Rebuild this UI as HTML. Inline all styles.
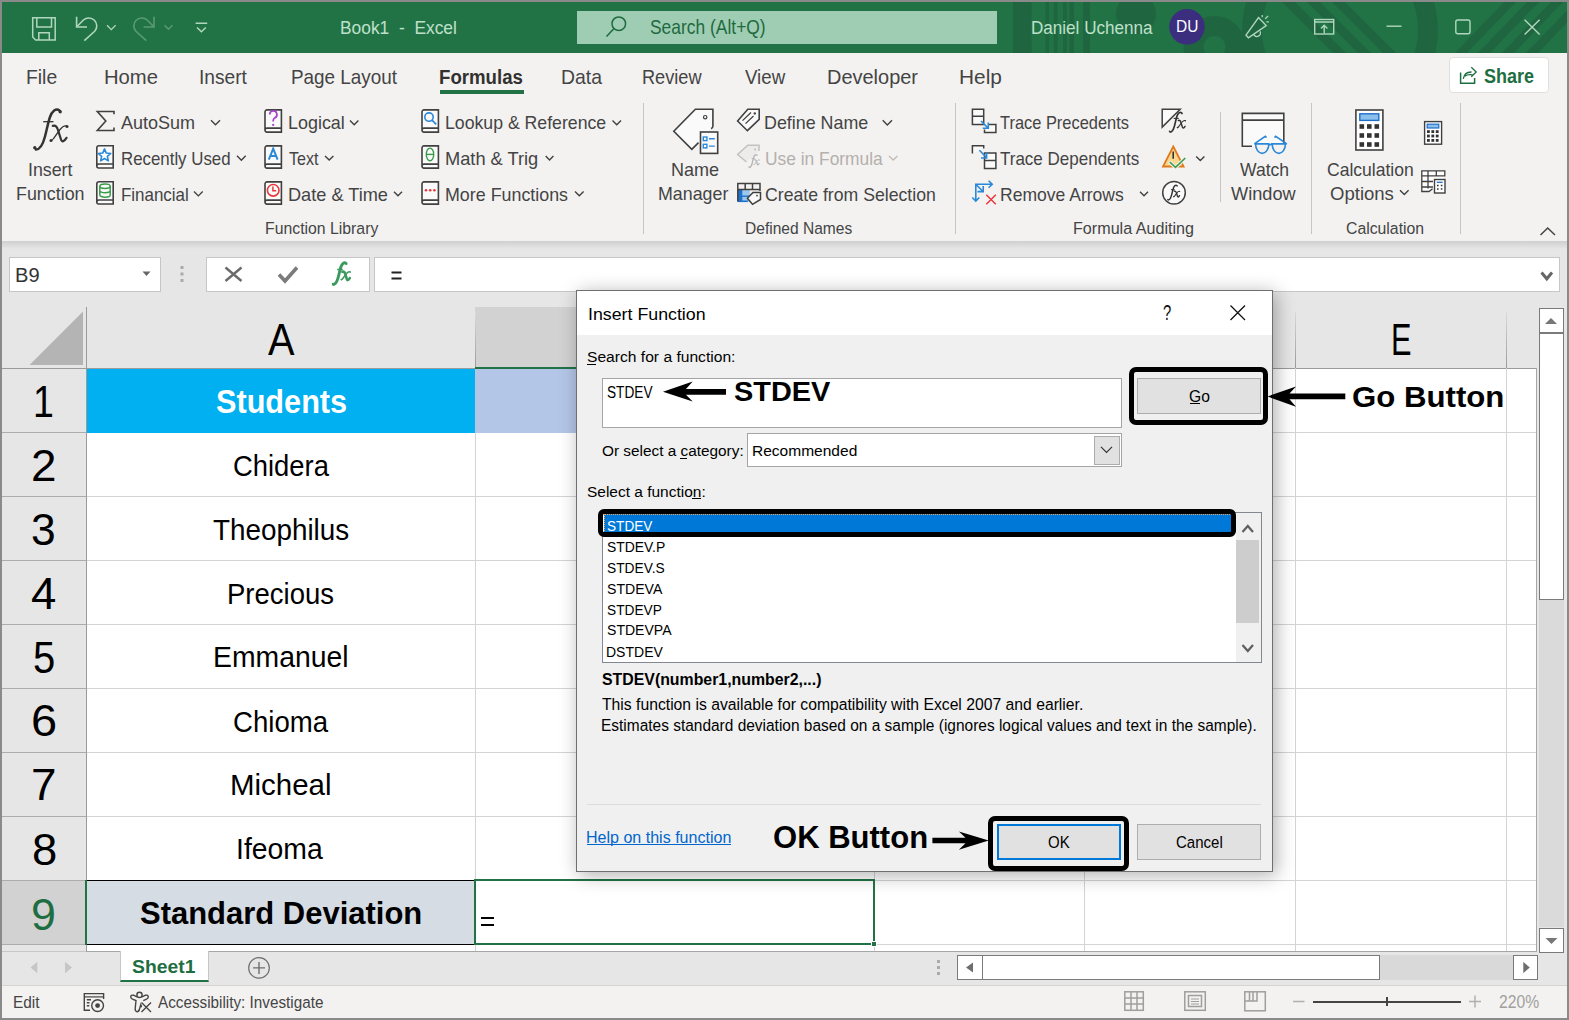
<!DOCTYPE html>
<html><head><meta charset="utf-8">
<style>
html,body{margin:0;padding:0}
body{width:1569px;height:1020px;position:relative;overflow:hidden;background:#8a8a8a;font-family:"Liberation Sans",sans-serif}
.a{position:absolute;box-sizing:border-box}
.t{position:absolute;white-space:pre;transform-origin:0 0;font-family:"Liberation Sans",sans-serif}
svg{position:absolute;overflow:visible}
</style></head><body>
<!-- title bar -->
<div class="a" style="left:2px;top:2px;width:1565px;height:51px;background:#217346;overflow:hidden">
<svg style="left:0;top:0" width="1565" height="51" viewBox="2 2 1565 51">
<g fill="#1f6640" opacity="1">
<rect x="1013" y="0" width="18.6" height="60"/>
<rect x="1045.5" y="0" width="3.5" height="60"/>
<rect x="1053.8" y="0" width="3.7" height="60"/>
<rect x="1063" y="0" width="3.7" height="60"/>
<rect x="1069.5" y="0" width="4.5" height="60"/>
<path d="M1083 0 H1090 V60 H1083 Z"/>
<circle cx="1136" cy="14" r="20"/>
<path fill-rule="evenodd" d="M1214.5 47 m-31 0 a31 31 0 1 0 62 0 a31 31 0 1 0 -62 0 Z M1214.5 47 m-11 0 a11 11 0 1 0 22 0 a11 11 0 1 0 -22 0 Z"/>
<path d="M1260 0 H1290 L1330 60 H1300 Z" opacity="0.0"/>
<path d="M1280 0 H1293 L1348 55 H1335 Z"/>
<path d="M1305 0 H1318 L1373 55 H1360 Z"/>
<path d="M1330 0 H1343 L1398 55 H1385 Z"/>
<path fill-rule="evenodd" d="M1340 30 m-98 0 a98 98 0 1 0 196 0 a98 98 0 1 0 -196 0 Z M1340 30 m-78 0 a78 78 0 1 0 156 0 a78 78 0 1 0 -156 0 Z"/>
<path d="M1453 55 H1465 L1518 0 H1506 Z"/>
<path d="M1476 55 H1488 L1541 0 H1529 Z"/>
<path d="M1500 55 H1512 L1565 0 H1553 Z"/>
<path d="M1524 55 H1536 L1589 0 H1577 Z"/>
</g></svg>
</div>
<div class="a" style="left:577px;top:11px;width:420px;height:33px;background:#9fcdb3"></div>
<!-- ribbon -->
<div class="a" style="left:2px;top:53px;width:1565px;height:188px;background:#f3f2f1"></div>
<div class="a" style="left:440px;top:90px;width:84px;height:4px;background:#217346"></div>
<div class="a" style="left:1448.5px;top:57px;width:100px;height:35.5px;background:#fff;border:1px solid #e1dfdd;border-radius:4px"></div>
<!-- group separators -->
<div class="a" style="left:643px;top:103px;width:1px;height:131px;background:#c8c6c4"></div>
<div class="a" style="left:955px;top:103px;width:1px;height:131px;background:#c8c6c4"></div>
<div class="a" style="left:1220px;top:112px;width:1px;height:90px;background:#c8c6c4"></div>
<div class="a" style="left:1311px;top:103px;width:1px;height:131px;background:#c8c6c4"></div>
<div class="a" style="left:1460px;top:103px;width:1px;height:131px;background:#c8c6c4"></div>
<!-- formula bar -->
<div class="a" style="left:2px;top:241px;width:1565px;height:710px;background:#e6e6e6"></div>
<div class="a" style="left:2px;top:241px;width:1565px;height:8px;background:linear-gradient(#cfcfcf,#e6e6e6)"></div>
<div class="a" style="left:9px;top:257px;width:152px;height:35px;background:#fff;border:1px solid #c6c6c6"></div>
<div class="a" style="left:206px;top:257px;width:164px;height:35px;background:#fff;border:1px solid #c6c6c6"></div>
<div class="a" style="left:374px;top:257px;width:1186px;height:35px;background:#fff;border:1px solid #c6c6c6"></div>
<!-- grid -->
<div class="a" style="left:86px;top:368px;width:1450px;height:583px;background:#fff"></div>
<div class="a" style="left:475px;top:307px;width:399px;height:61px;background:#d2d2d2"></div>
<div class="a" style="left:475px;top:312px;width:1px;height:56px;background:linear-gradient(#dadada,#9a9a9a)"></div>
<div class="a" style="left:874px;top:312px;width:1px;height:56px;background:linear-gradient(#dadada,#9a9a9a)"></div>
<div class="a" style="left:1084px;top:312px;width:1px;height:56px;background:linear-gradient(#dadada,#9a9a9a)"></div>
<div class="a" style="left:1295px;top:312px;width:1px;height:56px;background:linear-gradient(#dadada,#9a9a9a)"></div>
<div class="a" style="left:1506px;top:312px;width:1px;height:56px;background:linear-gradient(#dadada,#9a9a9a)"></div>
<div class="a" style="left:86px;top:307px;width:1px;height:644px;background:#9b9b9b"></div>
<div class="a" style="left:2px;top:368px;width:1534px;height:1px;background:#9b9b9b"></div>
<div class="a" style="left:2px;top:432px;width:84px;height:1px;background:#acacac"></div>
<div class="a" style="left:2px;top:496px;width:84px;height:1px;background:#acacac"></div>
<div class="a" style="left:2px;top:560px;width:84px;height:1px;background:#acacac"></div>
<div class="a" style="left:2px;top:624px;width:84px;height:1px;background:#acacac"></div>
<div class="a" style="left:2px;top:688px;width:84px;height:1px;background:#acacac"></div>
<div class="a" style="left:2px;top:752px;width:84px;height:1px;background:#acacac"></div>
<div class="a" style="left:2px;top:816px;width:84px;height:1px;background:#acacac"></div>
<div class="a" style="left:2px;top:880px;width:84px;height:1px;background:#acacac"></div>
<div class="a" style="left:2px;top:944px;width:84px;height:1px;background:#acacac"></div>
<div class="a" style="left:2px;top:881px;width:84px;height:63px;background:#d2d2d2"></div>
<div class="a" style="left:85px;top:880px;width:2px;height:65px;background:#217346"></div>
<div class="a" style="left:475px;top:368px;width:1px;height:583px;background:#d4d4d4"></div>
<div class="a" style="left:874px;top:368px;width:1px;height:583px;background:#d4d4d4"></div>
<div class="a" style="left:1084px;top:368px;width:1px;height:583px;background:#d4d4d4"></div>
<div class="a" style="left:1295px;top:368px;width:1px;height:583px;background:#d4d4d4"></div>
<div class="a" style="left:1506px;top:368px;width:1px;height:583px;background:#d4d4d4"></div>
<div class="a" style="left:87px;top:432px;width:1449px;height:1px;background:#d4d4d4"></div>
<div class="a" style="left:87px;top:496px;width:1449px;height:1px;background:#d4d4d4"></div>
<div class="a" style="left:87px;top:560px;width:1449px;height:1px;background:#d4d4d4"></div>
<div class="a" style="left:87px;top:624px;width:1449px;height:1px;background:#d4d4d4"></div>
<div class="a" style="left:87px;top:688px;width:1449px;height:1px;background:#d4d4d4"></div>
<div class="a" style="left:87px;top:752px;width:1449px;height:1px;background:#d4d4d4"></div>
<div class="a" style="left:87px;top:816px;width:1449px;height:1px;background:#d4d4d4"></div>
<div class="a" style="left:87px;top:880px;width:1449px;height:1px;background:#d4d4d4"></div>
<div class="a" style="left:87px;top:944px;width:1449px;height:1px;background:#d4d4d4"></div>
<div class="a" style="left:87px;top:369px;width:388px;height:64px;background:#00b0f0"></div>
<div class="a" style="left:475px;top:369px;width:399px;height:64px;background:#b4c6e7"></div>
<div class="a" style="left:87px;top:880px;width:388px;height:65px;background:#d6dce4;border-top:1px solid #000;border-bottom:1px solid #000"></div>
<div class="a" style="left:475px;top:367px;width:399px;height:2px;background:#217346"></div>
<div class="a" style="left:474px;top:879px;width:401px;height:66px;border:2px solid #217346"></div>
<div class="a" style="left:871px;top:941px;width:6px;height:6px;background:#217346;border:1px solid #fff"></div>
<div class="a" style="left:481px;top:916.5px;width:13px;height:2px;background:#000"></div>
<div class="a" style="left:481px;top:923.5px;width:13px;height:2px;background:#000"></div>
<svg style="left:0;top:0" width="1" height="1"><path d="M29.5 365 L83 365 L83 311.5 Z" fill="#b4b4b4"/></svg>
<div class="a" style="left:1536px;top:307px;width:31px;height:645px;background:#e6e6e6"></div>
<div class="a" style="left:1539px;top:599px;width:25px;height:328px;background:#dadada"></div>
<div class="a" style="left:1539px;top:308px;width:25px;height:25px;background:#fff;border:1px solid #7a7a7a"></div>
<div class="a" style="left:1539px;top:333px;width:25px;height:267px;background:#fff;border:1px solid #7a7a7a"></div>
<svg style="left:0;top:0" width="1" height="1"><path d="M1545 324 L1557 324 L1551 318 Z" fill="#777"/></svg>
<div class="a" style="left:1536px;top:368px;width:1px;height:584px;background:#a6a6a6"></div>
<svg style="left:0;top:0" width="1" height="1"><path d="M142.5 271.5 L150.5 271.5 L146.5 276 Z" fill="#666"/><rect x="180.5" y="266" width="3" height="3" fill="#aaa"/><rect x="180.5" y="272.5" width="3" height="3" fill="#aaa"/><rect x="180.5" y="279" width="3" height="3" fill="#aaa"/><path d="M225.5 267.5 L241.5 281 M241.5 267.5 L225.5 281" stroke="#6b6b6b" stroke-width="2.4"/><path d="M279 274.5 L285 281 L297 267.5" stroke="#7b7b7b" stroke-width="3.6" fill="none"/><path d="M391.5 272.6 H401.5 M391.5 278.4 H401.5" stroke="#222" stroke-width="2"/><path d="M1541.5 272.5 L1546.8 278.8 L1552 272.5" stroke="#666" stroke-width="3" fill="none"/></svg>
<svg style="left:0;top:0" width="1" height="1"><g transform="translate(313.91,203.748) scale(0.54)" fill="none" stroke="#3c9a5f" stroke-linecap="round"><path d="M59.5 110.4 C56 107.8 52 111 49.8 117.5 C48 123 46.5 131 45 136.5 C43 144 40.5 149.5 36 149.6" stroke-width="5.4"/><path d="M43.2 121.7 H53.5" stroke-width="2.8" stroke-linecap="butt"/><path d="M52.8 125.9 C55.5 125 57 126.5 58 130 L61 139.5 C61.8 142 63.5 142.5 66.5 137.8" stroke-width="4.8"/><path d="M66.8 126.2 C64.5 125 62.5 126.5 60 129.5 L53.5 138.5 C52.5 140 51.5 140.8 50.8 140.6" stroke-width="2.8"/><circle cx="60.2" cy="111.8" r="1.7" fill="#3c9a5f" stroke="none"/><circle cx="34.8" cy="147.8" r="1.7" fill="#3c9a5f" stroke="none"/><circle cx="67" cy="126.4" r="1.5" fill="#3c9a5f" stroke="none"/><circle cx="51" cy="140.4" r="1.5" fill="#3c9a5f" stroke="none"/></g></svg>
<!-- bottom bars -->
<div class="a" style="left:2px;top:951px;width:1565px;height:34px;background:#e6e6e6;border-top:1px solid #c6c6c6"></div>
<div class="a" style="left:2px;top:985px;width:1565px;height:33px;background:#f3f2f1;border-top:1px solid #d4d4d4"></div>
<div class="a" style="left:86px;top:951px;width:1451px;height:1px;background:#a6a6a6"></div>
<div class="a" style="left:1537px;top:951px;width:30px;height:2px;background:#e6e6e6"></div>
<div class="a" style="left:1539px;top:928px;width:25px;height:24.5px;background:#fff;border:1px solid #7a7a7a"></div>
<svg style="left:0;top:0" width="1" height="1"><path d="M1545.5 938 L1557.5 938 L1551.5 944 Z" fill="#777"/></svg>
<div class="a" style="left:120px;top:951px;width:89px;height:31px;background:#fff;border-left:1px solid #c6c6c6;border-right:1px solid #c6c6c6;border-bottom:2px solid #217346"></div>
<svg style="left:0;top:0" width="1" height="1"><path d="M37.3 961.8 L37.3 973.2 L30.6 967.5 Z" fill="#c6c6c6"/><path d="M65 961.8 L65 973.2 L72 967.5 Z" fill="#c6c6c6"/><circle cx="259" cy="967.9" r="10.3" fill="none" stroke="#6e6e6e" stroke-width="1.2"/><path d="M253 967.9 H265 M259 961.9 V973.9" stroke="#6e6e6e" stroke-width="1.4"/><rect x="937" y="960" width="3" height="3" fill="#aaa"/><rect x="937" y="966" width="3" height="3" fill="#aaa"/><rect x="937" y="972" width="3" height="3" fill="#aaa"/></svg>
<div class="a" style="left:957px;top:955px;width:581px;height:25px;background:#d9d9d9"></div>
<div class="a" style="left:957px;top:955px;width:26px;height:25px;background:#fff;border:1px solid #7a7a7a"></div>
<div class="a" style="left:982px;top:955px;width:398px;height:25px;background:#fff;border:1px solid #7a7a7a"></div>
<div class="a" style="left:1513px;top:955px;width:25px;height:25px;background:#fff;border:1px solid #7a7a7a"></div>
<svg style="left:0;top:0" width="1" height="1"><path d="M973 962.5 L973 972.5 L966 967.5 Z" fill="#6e6e6e"/><path d="M1523.3 961.8 L1523.3 973.2 L1529.8 967.5 Z" fill="#6e6e6e"/></svg>
<svg style="left:0;top:0" width="1" height="1" fill="none" stroke="#9e9e9e" stroke-width="1.5"><rect x="1124.8" y="991.8" width="18.5" height="18.5"/><path d="M1131 991.8 V1010.3 M1137 991.8 V1010.3 M1124.8 998 H1143.3 M1124.8 1004 H1143.3"/><rect x="1184.8" y="991.8" width="20.5" height="18.5"/><rect x="1188.5" y="995.5" width="13" height="11"/><path d="M1191 999 H1199 M1191 1001.5 H1199 M1191 1004 H1199" stroke-width="1"/><rect x="1244.8" y="991.8" width="20.5" height="19"/><path d="M1244.8 1001 H1257 V991.8 M1249.5 991.8 V1001 M1253 991.8 V1001"/><path d="M1293 1001.6 H1304.5 M1469 1001.6 H1481 M1475 995.6 V1007.6" stroke="#b0b0b0"/></svg>
<div class="a" style="left:1312.8px;top:1000.8px;width:148.5px;height:2.2px;background:#444"></div>
<div class="a" style="left:1385.8px;top:997px;width:2px;height:9px;background:#444"></div>
<svg style="left:0;top:0" width="1" height="1" fill="none" stroke="#444" stroke-width="1.4"><path d="M90 1010.2 H84.3 V993.6 H103.6 V999"/><path d="M84.3 996.9 H103.6" stroke-width="1.2"/><path d="M86.8 999.8 H91 M86.8 1002.8 H89.5 M86.8 1005.7 H89.3"/><circle cx="97.6" cy="1005.6" r="5.9"/><circle cx="97.6" cy="1005.6" r="2.4" fill="#444" stroke="none"/><circle cx="139.5" cy="994.9" r="2.6"/><path d="M137 996.8 L133.5 995.2 Q130.8 994.6 130.7 997 Q130.8 998.6 133 999.3 L136 1000.5 L135.3 1007.5 Q134.7 1011.5 137 1011.7 Q139 1011.7 139.5 1009 L140.8 1004.6 L141.6 1007.2"/><path d="M142 996.8 L145.5 995.2 Q148.2 994.6 148.3 997 Q148.2 998.6 146 999.3 L143.3 1000.6"/><path d="M141.5 1002.5 L151 1012 M151 1002.5 L141.5 1012"/></svg>
<div class="a" style="left:576px;top:290px;width:697px;height:582px;background:#f0f0f0;border:1px solid #6f6f6f;box-shadow:3px 3px 18px rgba(0,0,0,0.32)"></div>
<div class="a" style="left:577px;top:291px;width:695px;height:44px;background:#fff"></div>
<svg style="left:0;top:0" width="1" height="1"><path d="M1230.5 305.5 L1245 320 M1245 305.5 L1230.5 320" stroke="#111" stroke-width="1.3"/></svg>
<div class="a" style="left:602px;top:378px;width:520px;height:50px;background:#fff;border:1px solid #a5a5a5"></div>
<div class="a" style="left:1137px;top:378px;width:124px;height:36px;background:#e1e1e1;border:1px solid #adadad"></div>
<div class="a" style="left:1128.5px;top:367px;width:139.5px;height:58px;border:5.3px solid #000;border-radius:7px"></div>
<div class="a" style="left:747px;top:433px;width:375px;height:34px;background:#fff;border:1px solid #a5a5a5"></div>
<div class="a" style="left:1094px;top:435.5px;width:26px;height:29.5px;background:#e1e1e1;border:1px solid #adadad"></div>
<svg style="left:0;top:0" width="1" height="1"><path d="M1101 446.8 L1106.5 452.5 L1112 446.8" stroke="#333" stroke-width="1.2" fill="none"/></svg>
<div class="a" style="left:602px;top:512px;width:660px;height:150.5px;background:#fff;border:1px solid #828790"></div>
<div class="a" style="left:1236px;top:513px;width:25px;height:148.5px;background:#f0f0f0"></div>
<div class="a" style="left:1236px;top:540px;width:23px;height:83px;background:#cdcdcd"></div>
<svg style="left:0;top:0" width="1" height="1" fill="none" stroke="#606060" stroke-width="2.2"><path d="M1242.5 532 L1247.8 526 L1253 532 M1242.5 645 L1247.8 651 L1253 645"/></svg>
<div class="a" style="left:604px;top:514px;width:628px;height:19px;background:#0078d7;border:1px dotted #f0a050"></div>
<div class="a" style="left:598.3px;top:509.2px;width:638px;height:28px;border:5px solid #000;border-radius:6px"></div>
<div class="a" style="left:587px;top:804px;width:674px;height:1px;background:#dcdcdc"></div>
<div class="a" style="left:997px;top:824px;width:124px;height:36px;background:#e1e1e1;border:2px solid #0078d7"></div>
<div class="a" style="left:988px;top:816px;width:141px;height:55px;border:5.3px solid #000;border-radius:7px"></div>
<div class="a" style="left:1137px;top:824px;width:124px;height:36px;background:#e1e1e1;border:1px solid #adadad"></div>
<div class="a" style="left:587.3px;top:364px;width:8.5px;height:1px;background:#000"></div>
<div class="a" style="left:679.5px;top:457.5px;width:7px;height:1px;background:#000"></div>
<div class="a" style="left:692px;top:498px;width:9px;height:1px;background:#000"></div>
<div class="a" style="left:1189.5px;top:403.3px;width:10px;height:1px;background:#000"></div>
<div class="a" style="left:587.4px;top:844px;width:143.3px;height:1px;background:#0066cc"></div>
<svg style="left:0;top:0" width="1" height="1" fill="#000"><path d="M663 391.8 L692.7 381.5 L686 389 L726 389 L726 394.8 L686 394.8 L692.7 401.4 Z"/><path d="M1267.5 396.5 L1296 386.5 L1289.5 393.6 L1345.3 393.6 L1345.3 399.3 L1289.5 399.3 L1296 406.7 Z"/><path d="M988.7 840.5 L958.9 831.5 L965.5 837.7 L932.4 837.7 L932.4 843.3 L965.5 843.3 L958.9 849.7 Z"/></svg>
<svg style="left:0;top:0" width="1569" height="1020" viewBox="0 0 1569 1020">
<g transform="translate(0,0) scale(1)" fill="none" stroke="#333" stroke-linecap="round"><path d="M59.5 110.4 C56 107.8 52 111 49.8 117.5 C48 123 46.5 131 45 136.5 C43 144 40.5 149.5 36 149.6" stroke-width="2.5"/><path d="M43.2 121.7 H53.5" stroke-width="1.3" stroke-linecap="butt"/><path d="M52.8 125.9 C55.5 125 57 126.5 58 130 L61 139.5 C61.8 142 63.5 142.5 66.5 137.8" stroke-width="2.2"/><path d="M66.8 126.2 C64.5 125 62.5 126.5 60 129.5 L53.5 138.5 C52.5 140 51.5 140.8 50.8 140.6" stroke-width="1.3"/><circle cx="60.2" cy="111.8" r="1.7" fill="#333" stroke="none"/><circle cx="34.8" cy="147.8" r="1.7" fill="#333" stroke="none"/><circle cx="67" cy="126.4" r="1.5" fill="#333" stroke="none"/><circle cx="51" cy="140.4" r="1.5" fill="#333" stroke="none"/></g>
<path d="M114 114.3 V111.5 H97.3 L105.8 121 L97.3 130.5 H114 V127.6" fill="none" stroke="#404040" stroke-width="1.6"/>
<g transform="translate(96,145)"><path d="M0.8 21 V2.8 A2 2 0 0 1 2.8 0.8 H17.2 V23 H2.8 A2 2 0 0 1 0.8 21 A2 2 0 0 1 2.8 19 H17.2" fill="#fafafa" stroke="#404040" stroke-width="1.6"/><path d="M8.50 3.90 L10.26 8.07 L14.78 8.46 L11.35 11.43 L12.38 15.84 L8.50 13.50 L4.62 15.84 L5.65 11.43 L2.22 8.46 L6.74 8.07 Z" fill="#fff" stroke="#2b88d8" stroke-width="1.6" stroke-linejoin="round"/></g>
<g transform="translate(96,181)"><path d="M0.8 21 V2.8 A2 2 0 0 1 2.8 0.8 H17.2 V23 H2.8 A2 2 0 0 1 0.8 21 A2 2 0 0 1 2.8 19 H17.2" fill="#fafafa" stroke="#404040" stroke-width="1.6"/><ellipse cx="9" cy="5.2" rx="5.2" ry="2.2" fill="none" stroke="#3a9c4a" stroke-width="1.5"/><path d="M3.8 5.2 V14 A5.2 2.2 0 0 0 14.2 14 V5.2 M3.8 9.6 A5.2 2.2 0 0 0 14.2 9.6" fill="none" stroke="#3a9c4a" stroke-width="1.5"/></g>
<g transform="translate(264.2,109.1)"><path d="M0.8 21 V2.8 A2 2 0 0 1 2.8 0.8 H17.2 V23 H2.8 A2 2 0 0 1 0.8 21 A2 2 0 0 1 2.8 19 H17.2" fill="#fafafa" stroke="#404040" stroke-width="1.6"/><path d="M5.5 5.5 A3.6 3.6 0 1 1 10.5 8.8 Q9 9.6 9 11.5 V12.5" fill="none" stroke="#a540c8" stroke-width="1.7"/><circle cx="9" cy="15.8" r="1.1" fill="#a540c8"/></g>
<g transform="translate(264.2,145.1)"><path d="M0.8 21 V2.8 A2 2 0 0 1 2.8 0.8 H17.2 V23 H2.8 A2 2 0 0 1 0.8 21 A2 2 0 0 1 2.8 19 H17.2" fill="#fafafa" stroke="#404040" stroke-width="1.6"/><path d="M4.6 14.5 L9 3.5 L13.4 14.5 M6.2 10.8 H11.8" fill="none" stroke="#2b88d8" stroke-width="2"/></g>
<g transform="translate(264.2,181.1)"><path d="M0.8 21 V2.8 A2 2 0 0 1 2.8 0.8 H17.2 V23 H2.8 A2 2 0 0 1 0.8 21 A2 2 0 0 1 2.8 19 H17.2" fill="#fafafa" stroke="#404040" stroke-width="1.6"/><circle cx="9" cy="9.2" r="5.8" fill="none" stroke="#e8383d" stroke-width="1.6"/><path d="M8.7 5.5 V9.6 H12" fill="none" stroke="#e8383d" stroke-width="1.5"/></g>
<g transform="translate(421.2,109.1)"><path d="M0.8 21 V2.8 A2 2 0 0 1 2.8 0.8 H17.2 V23 H2.8 A2 2 0 0 1 0.8 21 A2 2 0 0 1 2.8 19 H17.2" fill="#fafafa" stroke="#404040" stroke-width="1.6"/><circle cx="7.8" cy="8" r="4.2" fill="none" stroke="#2b88d8" stroke-width="1.6"/><path d="M10.8 11 L15 15.3" stroke="#2b88d8" stroke-width="1.7"/></g>
<g transform="translate(421.2,145.1)"><path d="M0.8 21 V2.8 A2 2 0 0 1 2.8 0.8 H17.2 V23 H2.8 A2 2 0 0 1 0.8 21 A2 2 0 0 1 2.8 19 H17.2" fill="#fafafa" stroke="#404040" stroke-width="1.6"/><ellipse cx="8.8" cy="9.3" rx="3.7" ry="6.3" fill="none" stroke="#3a9c4a" stroke-width="1.4"/><path d="M5.1 9.3 H12.5" stroke="#3a9c4a" stroke-width="1.4"/></g>
<g transform="translate(421.2,181.1)"><path d="M0.8 21 V2.8 A2 2 0 0 1 2.8 0.8 H17.2 V23 H2.8 A2 2 0 0 1 0.8 21 A2 2 0 0 1 2.8 19 H17.2" fill="#fafafa" stroke="#404040" stroke-width="1.6"/><circle cx="4.8" cy="9.2" r="1.3" fill="#e8383d"/><circle cx="9" cy="9.2" r="1.3" fill="#e8383d"/><circle cx="13.2" cy="9.2" r="1.3" fill="#e8383d"/></g>
<path d="M211 120.35 L215.5 124.85 L220 120.35" fill="none" stroke="#404040" stroke-width="1.4"/>
<path d="M237 155.825 L241.35 160.175 L245.7 155.825" fill="none" stroke="#404040" stroke-width="1.4"/>
<path d="M194 191.52499999999998 L198.35 195.875 L202.7 191.52499999999998" fill="none" stroke="#404040" stroke-width="1.4"/>
<path d="M350 120.5 L354.2 124.69999999999999 L358.4 120.5" fill="none" stroke="#404040" stroke-width="1.4"/>
<path d="M325 155.9 L329.2 160.1 L333.4 155.9" fill="none" stroke="#404040" stroke-width="1.4"/>
<path d="M394 191.7 L398.0 195.7 L402 191.7" fill="none" stroke="#404040" stroke-width="1.4"/>
<path d="M612.5 120.475 L616.75 124.725 L621 120.475" fill="none" stroke="#404040" stroke-width="1.4"/>
<path d="M545.7 156.07500000000002 L549.55 159.92499999999998 L553.4 156.07500000000002" fill="none" stroke="#404040" stroke-width="1.4"/>
<path d="M575 191.54999999999998 L579.3 195.85 L583.6 191.54999999999998" fill="none" stroke="#404040" stroke-width="1.4"/>
<path d="M882.7 120.275 L887.35 124.92499999999998 L892 120.275" fill="none" stroke="#404040" stroke-width="1.4"/>
<path d="M1140 191.7 L1144.0 195.7 L1148 191.7" fill="none" stroke="#404040" stroke-width="1.4"/>
<path d="M1196.2 156.45 L1200.3000000000002 160.55 L1204.4 156.45" fill="none" stroke="#404040" stroke-width="1.4"/>
<path d="M1400 190.15000000000003 L1404.3 194.45 L1408.6 190.15000000000003" fill="none" stroke="#404040" stroke-width="1.4"/>
<path d="M889 155.9 L893.2 160.1 L897.4 155.9" fill="none" stroke="#c0bebc" stroke-width="1.4"/>
<path d="M698.5 142.6 L691.8 149.3 L673.8 131.3 L695.4 109.3 H712.9 V126 Q712.9 128.2 711 128.6" fill="#fafafa" stroke="#404040" stroke-width="1.6" stroke-linejoin="miter"/>
<circle cx="705.2" cy="117.2" r="1.7" fill="none" stroke="#404040" stroke-width="1.2"/>
<rect x="700.5" y="132" width="17.2" height="21.4" fill="#fafafa" stroke="#404040" stroke-width="1.6"/>
<rect x="703.3" y="137" width="3.6" height="3.6" fill="none" stroke="#2b88d8" stroke-width="1.4"/><rect x="703.3" y="144.3" width="3.6" height="3.6" fill="none" stroke="#2b88d8" stroke-width="1.4"/><path d="M709 138.8 H714.8 M709 146.1 H714.8" stroke="#2b88d8" stroke-width="1.4"/>
<path d="M737.6 121 L747.8 109.3 H759.2 V119.4 L747.4 130.7 Z" fill="#fafafa" stroke="#404040" stroke-width="1.6" stroke-linejoin="miter"/>
<circle cx="754.8" cy="113.4" r="1.2" fill="#404040"/><path d="M742.5 120.6 L751 112.5 M745.5 123.6 L753.5 116" stroke="#404040" stroke-width="1.3"/>
<path d="M746.5 162 L737.6 154.5 L747.8 145.2 H759 V151" fill="#ececec" stroke="#c3c1bf" stroke-width="1.5"/><circle cx="755" cy="149.5" r="1.1" fill="#c3c1bf"/>
<g transform="translate(737.78,119.62) scale(0.32)" fill="none" stroke="#b9b7b5" stroke-linecap="round"><path d="M59.5 110.4 C56 107.8 52 111 49.8 117.5 C48 123 46.5 131 45 136.5 C43 144 40.5 149.5 36 149.6" stroke-width="4.4"/><path d="M43.2 121.7 H53.5" stroke-width="3.0" stroke-linecap="butt"/><path d="M52.8 125.9 C55.5 125 57 126.5 58 130 L61 139.5 C61.8 142 63.5 142.5 66.5 137.8" stroke-width="4.0"/><path d="M66.8 126.2 C64.5 125 62.5 126.5 60 129.5 L53.5 138.5 C52.5 140 51.5 140.8 50.8 140.6" stroke-width="3.0"/><circle cx="60.2" cy="111.8" r="1.7" fill="#b9b7b5" stroke="none"/><circle cx="34.8" cy="147.8" r="1.7" fill="#b9b7b5" stroke="none"/><circle cx="67" cy="126.4" r="1.5" fill="#b9b7b5" stroke="none"/><circle cx="51" cy="140.4" r="1.5" fill="#b9b7b5" stroke="none"/></g>
<rect x="737.8" y="190" width="12" height="11.7" fill="#9cc8f0"/><rect x="737.8" y="190" width="4.5" height="11.7" fill="#1f72c9"/><rect x="737.8" y="195.5" width="12" height="1.4" fill="#1f72c9"/><rect x="737.8" y="200.5" width="10" height="1.6" fill="#1f72c9"/>
<path d="M737.8 201.5 V183.5 H760 V191 M737.8 189.5 H760 M745.2 183.5 V189.5 M752.5 183.5 V189.5" fill="none" stroke="#404040" stroke-width="1.5"/>
<path d="M747.4 198.3 L753 192.5 H760.5 V199.5 L752.5 204.3 Z" fill="#fafafa" stroke="#404040" stroke-width="1.5"/><circle cx="757" cy="195.6" r="0.9" fill="#404040"/>
<path d="M972.4 109.3 H983.7 V124.6 H972.4 Z M972.4 116.3 H983.7 M988 124.6 H995.9 V132.6 H984.5 V129.5" fill="#fafafa" stroke="#404040" stroke-width="1.5"/>
<path d="M981 121 L987.5 127.5 M982.8 128.2 H988.3 V122.6" fill="none" stroke="#2b88d8" stroke-width="1.6"/>
<path d="M972.4 153.4 V145.7 H983.7 V148.5 M984.5 153 H995.9 V168.6 H984.5 Z M984.5 160.6 H995.9" fill="#fafafa" stroke="#404040" stroke-width="1.5"/>
<path d="M979.4 150.3 L986 157 M981 158 H986.6 V152.5" fill="none" stroke="#2b88d8" stroke-width="1.6"/>
<path d="M975.8 201 V184.3 H992 M972.3 197.5 L975.8 201 L979.3 197.5 M988.6 180.8 L992.2 184.3 L988.6 187.8 M976.3 184.8 L983 191.5 M977.5 191.6 H983.2 V186" fill="none" stroke="#2b88d8" stroke-width="1.6"/>
<path d="M986.3 194.8 L995.8 204.3 M995.8 194.8 L986.3 204.3" stroke="#e8383d" stroke-width="1.5"/>
<path d="M1162.2 109.3 H1180.2 L1162.2 127.1 Z" fill="#fafafa" stroke="#404040" stroke-width="1.5"/>
<g transform="translate(1152.4850000000001,58.790000000000006) scale(0.49)" fill="none" stroke="#333" stroke-linecap="round"><path d="M59.5 110.4 C56 107.8 52 111 49.8 117.5 C48 123 46.5 131 45 136.5 C43 144 40.5 149.5 36 149.6" stroke-width="3.4"/><path d="M43.2 121.7 H53.5" stroke-width="2.2" stroke-linecap="butt"/><path d="M52.8 125.9 C55.5 125 57 126.5 58 130 L61 139.5 C61.8 142 63.5 142.5 66.5 137.8" stroke-width="3.0"/><path d="M66.8 126.2 C64.5 125 62.5 126.5 60 129.5 L53.5 138.5 C52.5 140 51.5 140.8 50.8 140.6" stroke-width="2.2"/><circle cx="60.2" cy="111.8" r="1.7" fill="#333" stroke="none"/><circle cx="34.8" cy="147.8" r="1.7" fill="#333" stroke="none"/><circle cx="67" cy="126.4" r="1.5" fill="#333" stroke="none"/><circle cx="51" cy="140.4" r="1.5" fill="#333" stroke="none"/></g>
<path d="M1173.3 146.5 L1163 166.5 H1183.6 Z" fill="#f8d78f" stroke="#e07a1f" stroke-width="1.8" stroke-linejoin="miter"/>
<path d="M1173.2 151.5 V158.8" stroke="#333" stroke-width="1.6"/>
<path d="M1169.3 161.6 L1175.5 167.5 L1185.5 157.8" fill="none" stroke="#f3f2f1" stroke-width="3.6"/><path d="M1169.8 162 L1175.5 167.4 L1185.3 158" fill="none" stroke="#3a9c4a" stroke-width="1.6"/>
<circle cx="1174" cy="192.7" r="11.3" fill="#fafafa" stroke="#404040" stroke-width="1.5"/>
<g transform="translate(1154.905,144.67000000000002) scale(0.37)" fill="none" stroke="#333" stroke-linecap="round"><path d="M59.5 110.4 C56 107.8 52 111 49.8 117.5 C48 123 46.5 131 45 136.5 C43 144 40.5 149.5 36 149.6" stroke-width="4.0"/><path d="M43.2 121.7 H53.5" stroke-width="2.8" stroke-linecap="butt"/><path d="M52.8 125.9 C55.5 125 57 126.5 58 130 L61 139.5 C61.8 142 63.5 142.5 66.5 137.8" stroke-width="3.6"/><path d="M66.8 126.2 C64.5 125 62.5 126.5 60 129.5 L53.5 138.5 C52.5 140 51.5 140.8 50.8 140.6" stroke-width="2.8"/><circle cx="60.2" cy="111.8" r="1.7" fill="#333" stroke="none"/><circle cx="34.8" cy="147.8" r="1.7" fill="#333" stroke="none"/><circle cx="67" cy="126.4" r="1.5" fill="#333" stroke="none"/><circle cx="51" cy="140.4" r="1.5" fill="#333" stroke="none"/></g>
<path d="M1283.8 145 V113.4 H1242.3 V146.2 H1252" fill="#fafafa" stroke="#404040" stroke-width="1.6"/><path d="M1242.3 120.1 H1283.8" stroke="#404040" stroke-width="1.6"/>
<path d="M1253.8 144.5 H1288" stroke="#f3f2f1" stroke-width="3"/>
<path d="M1254.3 143.9 L1265.3 136.4 L1266.5 137.6 M1286.8 143.9 L1275.7 136.4 L1274.5 137.6 M1254.3 143.9 H1268.8 Q1270.2 145.5 1271.6 143.9 H1286.8 M1255.6 143.9 A6.6 9.5 0 0 0 1268.8 143.9 M1272.2 143.9 A6.6 9.5 0 0 0 1285.4 143.9" fill="none" stroke="#2b88d8" stroke-width="1.6"/>
<rect x="1355.9" y="110" width="27" height="40" fill="#fff" stroke="#404040" stroke-width="1.6"/>
<rect x="1359.8" y="113.8" width="19" height="6.6" fill="#8cc0ec" stroke="#1e6fc8" stroke-width="1.4"/>
<rect x="1359.5" y="124.2" width="4.6" height="4.6" fill="#333"/>
<rect x="1367" y="124.2" width="4.6" height="4.6" fill="#333"/>
<rect x="1374.5" y="124.2" width="4.6" height="4.6" fill="#333"/>
<rect x="1359.5" y="133.2" width="4.6" height="4.6" fill="#333"/>
<rect x="1367" y="133.2" width="4.6" height="4.6" fill="#333"/>
<rect x="1374.5" y="133.2" width="4.6" height="4.6" fill="#333"/>
<rect x="1359.5" y="142.2" width="4.6" height="4.6" fill="#333"/>
<rect x="1367" y="142.2" width="4.6" height="4.6" fill="#333"/>
<rect x="1374.5" y="142.2" width="4.6" height="4.6" fill="#333"/>
<rect x="1424.6" y="121.6" width="17" height="22.6" fill="#fff" stroke="#404040" stroke-width="1.4"/><rect x="1427.2" y="124.2" width="11.6" height="3.8" fill="#8cc0ec" stroke="#1e6fc8" stroke-width="1.2"/>
<rect x="1427" y="130.2" width="2.8" height="2.8" fill="#333"/>
<rect x="1431.4" y="130.2" width="2.8" height="2.8" fill="#333"/>
<rect x="1435.8" y="130.2" width="2.8" height="2.8" fill="#333"/>
<rect x="1427" y="134.6" width="2.8" height="2.8" fill="#333"/>
<rect x="1431.4" y="134.6" width="2.8" height="2.8" fill="#333"/>
<rect x="1435.8" y="134.6" width="2.8" height="2.8" fill="#333"/>
<rect x="1427" y="139" width="2.8" height="2.8" fill="#333"/>
<rect x="1431.4" y="139" width="2.8" height="2.8" fill="#333"/>
<rect x="1435.8" y="139" width="2.8" height="2.8" fill="#333"/>
<path d="M1444.8 176.5 V170.8 H1421.8 V191.5 H1429 L1432.5 188.7 M1421.8 175.8 H1444.8 M1421.8 181.5 H1433 M1421.8 187 H1433 M1428 170.8 V188.5 M1436.3 170.8 V176" fill="#fff" stroke="#404040" stroke-width="1.3"/>
<rect x="1434.5" y="179.5" width="10.5" height="13.5" fill="#fff" stroke="#404040" stroke-width="1.4"/><path d="M1436.8 182.3 H1442.7" stroke="#1e6fc8" stroke-width="1.3"/><path d="M1437 185.5 h1.6 m2.2 0 h1.6 M1437 189 h1.6 m2.2 0 h1.6" stroke="#333" stroke-width="1.6"/>
<path d="M1460.6 72.5 V83.3 H1474.6 V78" fill="none" stroke="#1e6e42" stroke-width="1.5"/><path d="M1463.3 78.8 Q1464.5 71.8 1471.5 72 M1464.8 76.2 Q1467 74.2 1472.5 74.8 M1471.3 67.2 L1476.2 72 L1471.3 76.8" fill="none" stroke="#1e6e42" stroke-width="1.3"/>
<path d="M1540.5 235 L1547.7 228 L1555 235" fill="none" stroke="#444" stroke-width="1.5"/>
</svg><svg style="left:0;top:0" width="1569" height="1020" viewBox="0 0 1569 1020">
<path d="M32.7 17.7 H55.2 V40 H35.6 L32.7 37 Z M36.8 17.7 V27 H51.5 V17.7 M38.8 40 V32.8 H49.3 V40" fill="none" stroke="#b0d7bd" stroke-width="1.5"/>
<path d="M76.6 16.8 V27 H87" fill="none" stroke="#b0d7bd" stroke-width="1.6"/>
<path d="M77.3 26.3 L83.4 20 A8 8 0 0 1 94.7 31.3 L84.3 40.6" fill="none" stroke="#b0d7bd" stroke-width="1.6"/>
<path d="M107 25.3 L111.3 29.6 L115.6 25.3" fill="none" stroke="#b0d7bd" stroke-width="1.3"/>
<path d="M154 16.8 V27 H143.6" fill="none" stroke="#5a9c72" stroke-width="1.6"/>
<path d="M153.3 26.3 L147.2 20 A8 8 0 0 0 135.9 31.3 L146.3 40.6" fill="none" stroke="#5a9c72" stroke-width="1.6"/>
<path d="M164.5 25.3 L168.5 29.3 L172.5 25.3" fill="none" stroke="#5a9c72" stroke-width="1.3"/>
<path d="M195.6 23.2 H207.2 M197 27.5 L201.4 31.8 L205.8 27.5" fill="none" stroke="#b0d7bd" stroke-width="1.5"/>
<circle cx="618.8" cy="23.7" r="6.8" fill="none" stroke="#1f6a3f" stroke-width="1.5"/><path d="M614 28.5 L606.5 36.5" stroke="#1f6a3f" stroke-width="1.6"/>
<circle cx="1187" cy="26.8" r="17.8" fill="#3b2e7e"/>
<path d="M1258.5 17.6 L1266.2 25.6 L1248.4 37.8 L1246 35.2 Z" fill="none" stroke="#b0d7bd" stroke-width="1.4" stroke-linejoin="miter"/>
<path d="M1253.6 34.4 A3.4 3.4 0 0 0 1260.1 31.4" fill="none" stroke="#b0d7bd" stroke-width="1.4"/>
<path d="M1262.2 15 V17.3 M1265.2 18.8 L1268.2 15.9 M1266.4 21.8 H1268.9" fill="none" stroke="#b0d7bd" stroke-width="1.3"/>
<rect x="1314.7" y="19.5" width="19" height="14.5" fill="none" stroke="#b0d7bd" stroke-width="1.4"/><path d="M1314.7 22 H1333.7 M1324.2 33.5 V25.5 M1321 28.5 L1324.2 25.3 L1327.4 28.5" fill="none" stroke="#b0d7bd" stroke-width="1.4"/>
<path d="M1386.5 26.2 H1401.5" stroke="#b0d7bd" stroke-width="1.4"/>
<rect x="1455.8" y="20" width="14.2" height="13.8" rx="2" fill="none" stroke="#b0d7bd" stroke-width="1.4"/>
<path d="M1524.6 19.8 L1539.6 34.6 M1539.6 19.8 L1524.6 34.6" stroke="#b0d7bd" stroke-width="1.4"/>
</svg>
<div class="t" style="left:339.54px;top:17.80px;font-size:19.13px;line-height:19.13px;color:#bfe0ca;transform:scaleX(0.9095);">Book1  -  Excel</div>
<div class="t" style="left:649.76px;top:18.16px;font-size:19.42px;line-height:19.42px;color:#1f6a3f;transform:scaleX(0.8975);">Search (Alt+Q)</div>
<div class="t" style="left:1030.66px;top:17.80px;font-size:19.13px;line-height:19.13px;color:#bfe0ca;transform:scaleX(0.8935);">Daniel Uchenna</div>
<div class="t" style="left:1175.69px;top:19.40px;font-size:15.94px;line-height:15.94px;color:#ffffff;transform:scaleX(0.9696);">DU</div>
<div class="t" style="left:26.29px;top:66.82px;font-size:20.29px;line-height:20.29px;color:#444444;transform:scaleX(0.9542);">File</div>
<div class="t" style="left:103.62px;top:66.82px;font-size:20.29px;line-height:20.29px;color:#444444;transform:scaleX(0.9978);">Home</div>
<div class="t" style="left:199.00px;top:66.82px;font-size:20.29px;line-height:20.29px;color:#444444;transform:scaleX(0.9446);">Insert</div>
<div class="t" style="left:290.82px;top:66.82px;font-size:20.29px;line-height:20.29px;color:#444444;transform:scaleX(0.9313);">Page Layout</div>
<div class="t" style="left:561.48px;top:66.82px;font-size:20.29px;line-height:20.29px;color:#444444;transform:scaleX(0.9565);">Data</div>
<div class="t" style="left:642.18px;top:66.82px;font-size:20.29px;line-height:20.29px;color:#444444;transform:scaleX(0.8959);">Review</div>
<div class="t" style="left:745.40px;top:66.82px;font-size:20.29px;line-height:20.29px;color:#444444;transform:scaleX(0.9211);">View</div>
<div class="t" style="left:826.74px;top:66.82px;font-size:20.29px;line-height:20.29px;color:#444444;transform:scaleX(0.9846);">Developer</div>
<div class="t" style="left:958.57px;top:66.82px;font-size:20.29px;line-height:20.29px;color:#444444;transform:scaleX(1.0274);">Help</div>
<div class="t" style="left:438.83px;top:66.82px;font-size:20.29px;line-height:20.29px;color:#323130;font-weight:bold;transform:scaleX(0.9189);">Formulas</div>
<div class="t" style="left:1484.42px;top:65.73px;font-size:20.87px;line-height:20.87px;color:#1e6e42;font-weight:bold;transform:scaleX(0.8625);">Share</div>
<div class="t" style="left:28.21px;top:161.09px;font-size:18.55px;line-height:18.55px;color:#444444;transform:scaleX(0.9576);">Insert</div>
<div class="t" style="left:16.40px;top:185.09px;font-size:18.55px;line-height:18.55px;color:#444444;transform:scaleX(0.9642);">Function</div>
<div class="t" style="left:121.40px;top:114.29px;font-size:18.55px;line-height:18.55px;color:#444444;transform:scaleX(0.9715);">AutoSum</div>
<div class="t" style="left:120.68px;top:149.89px;font-size:18.55px;line-height:18.55px;color:#444444;transform:scaleX(0.9091);">Recently Used</div>
<div class="t" style="left:120.68px;top:185.59px;font-size:18.55px;line-height:18.55px;color:#444444;transform:scaleX(0.9138);">Financial</div>
<div class="t" style="left:288.10px;top:114.29px;font-size:18.55px;line-height:18.55px;color:#444444;transform:scaleX(0.9677);">Logical</div>
<div class="t" style="left:289.25px;top:149.89px;font-size:18.55px;line-height:18.55px;color:#444444;transform:scaleX(0.8670);">Text</div>
<div class="t" style="left:288.08px;top:185.59px;font-size:18.55px;line-height:18.55px;color:#444444;transform:scaleX(0.9800);">Date &amp; Time</div>
<div class="t" style="left:445.42px;top:114.29px;font-size:18.55px;line-height:18.55px;color:#444444;transform:scaleX(0.9537);">Lookup &amp; Reference</div>
<div class="t" style="left:445.37px;top:149.89px;font-size:18.55px;line-height:18.55px;color:#444444;transform:scaleX(0.9839);">Math &amp; Trig</div>
<div class="t" style="left:445.40px;top:185.59px;font-size:18.55px;line-height:18.55px;color:#444444;transform:scaleX(0.9633);">More Functions</div>
<div class="t" style="left:265.37px;top:221.10px;font-size:15.94px;line-height:15.94px;color:#444444;transform:scaleX(0.9915);">Function Library</div>
<div class="t" style="left:670.59px;top:161.09px;font-size:18.55px;line-height:18.55px;color:#444444;transform:scaleX(0.9729);">Name</div>
<div class="t" style="left:658.41px;top:185.09px;font-size:18.55px;line-height:18.55px;color:#444444;transform:scaleX(0.9613);">Manager</div>
<div class="t" style="left:764.40px;top:114.29px;font-size:18.55px;line-height:18.55px;color:#444444;transform:scaleX(0.9636);">Define Name</div>
<div class="t" style="left:764.71px;top:149.89px;font-size:18.55px;line-height:18.55px;color:#b3b0ad;transform:scaleX(0.9372);">Use in Formula</div>
<div class="t" style="left:764.67px;top:185.59px;font-size:18.55px;line-height:18.55px;color:#444444;transform:scaleX(0.9533);">Create from Selection</div>
<div class="t" style="left:745.28px;top:221.10px;font-size:15.94px;line-height:15.94px;color:#444444;transform:scaleX(0.9757);">Defined Names</div>
<div class="t" style="left:1000.44px;top:114.29px;font-size:18.55px;line-height:18.55px;color:#444444;transform:scaleX(0.8857);">Trace Precedents</div>
<div class="t" style="left:1000.43px;top:149.89px;font-size:18.55px;line-height:18.55px;color:#444444;transform:scaleX(0.9175);">Trace Dependents</div>
<div class="t" style="left:999.63px;top:185.59px;font-size:18.55px;line-height:18.55px;color:#444444;transform:scaleX(0.9467);">Remove Arrows</div>
<div class="t" style="left:1072.74px;top:221.10px;font-size:15.94px;line-height:15.94px;color:#444444;transform:scaleX(1.0121);">Formula Auditing</div>
<div class="t" style="left:1239.60px;top:161.09px;font-size:18.55px;line-height:18.55px;color:#444444;transform:scaleX(0.9480);">Watch</div>
<div class="t" style="left:1230.70px;top:185.09px;font-size:18.55px;line-height:18.55px;color:#444444;transform:scaleX(0.9803);">Window</div>
<div class="t" style="left:1326.58px;top:161.09px;font-size:18.55px;line-height:18.55px;color:#444444;transform:scaleX(0.9459);">Calculation</div>
<div class="t" style="left:1329.63px;top:185.09px;font-size:18.55px;line-height:18.55px;color:#444444;transform:scaleX(1.0003);">Options</div>
<div class="t" style="left:1346.26px;top:221.10px;font-size:15.94px;line-height:15.94px;color:#444444;transform:scaleX(0.9906);">Calculation</div>
<div class="t" style="left:15.03px;top:264.82px;font-size:20.29px;line-height:20.29px;color:#333333;transform:scaleX(0.9906);">B9</div>
<div class="t" style="left:267.70px;top:317.31px;font-size:45.22px;line-height:45.22px;color:#000000;transform:scaleX(0.8789);">A</div>
<div class="t" style="left:1391.30px;top:317.96px;font-size:44.93px;line-height:44.93px;color:#000000;transform:scaleX(0.6838);">E</div>
<div class="t" style="left:32.66px;top:380.14px;font-size:43.77px;line-height:43.77px;color:#000000;transform:scaleX(0.8572);">1</div>
<div class="t" style="left:30.85px;top:444.34px;font-size:43.77px;line-height:43.77px;color:#000000;transform:scaleX(1.0479);">2</div>
<div class="t" style="left:30.61px;top:508.44px;font-size:43.77px;line-height:43.77px;color:#000000;transform:scaleX(1.0141);">3</div>
<div class="t" style="left:30.79px;top:572.44px;font-size:43.77px;line-height:43.77px;color:#000000;transform:scaleX(1.0413);">4</div>
<div class="t" style="left:33.35px;top:635.54px;font-size:43.77px;line-height:43.77px;color:#000000;transform:scaleX(0.9151);">5</div>
<div class="t" style="left:30.80px;top:699.14px;font-size:43.77px;line-height:43.77px;color:#000000;transform:scaleX(1.0723);">6</div>
<div class="t" style="left:30.85px;top:763.44px;font-size:43.77px;line-height:43.77px;color:#000000;transform:scaleX(1.0479);">7</div>
<div class="t" style="left:31.58px;top:827.64px;font-size:43.77px;line-height:43.77px;color:#000000;transform:scaleX(1.0377);">8</div>
<div class="t" style="left:31.40px;top:892.64px;font-size:43.77px;line-height:43.77px;color:#1e6e42;transform:scaleX(1.0236);">9</div>
<div class="t" style="left:215.82px;top:385.28px;font-size:33.33px;line-height:33.33px;color:#ffffff;font-weight:bold;transform:scaleX(0.9195);">Students</div>
<div class="t" style="left:232.72px;top:451.04px;font-size:29.71px;line-height:29.71px;color:#000000;transform:scaleX(0.9218);">Chidera</div>
<div class="t" style="left:212.76px;top:514.74px;font-size:29.71px;line-height:29.71px;color:#000000;transform:scaleX(0.9371);">Theophilus</div>
<div class="t" style="left:227.25px;top:578.64px;font-size:29.71px;line-height:29.71px;color:#000000;transform:scaleX(0.9257);">Precious</div>
<div class="t" style="left:213.48px;top:642.24px;font-size:29.71px;line-height:29.71px;color:#000000;transform:scaleX(0.9548);">Emmanuel</div>
<div class="t" style="left:232.71px;top:706.54px;font-size:29.71px;line-height:29.71px;color:#000000;transform:scaleX(0.9291);">Chioma</div>
<div class="t" style="left:230.20px;top:770.14px;font-size:29.71px;line-height:29.71px;color:#000000;transform:scaleX(0.9919);">Micheal</div>
<div class="t" style="left:236.38px;top:834.34px;font-size:29.71px;line-height:29.71px;color:#000000;transform:scaleX(0.9550);">Ifeoma</div>
<div class="t" style="left:139.82px;top:898.33px;font-size:30.43px;line-height:30.43px;color:#000000;font-weight:bold;transform:scaleX(1.0182);">Standard Deviation</div>
<div class="t" style="left:587.81px;top:305.77px;font-size:17.39px;line-height:17.39px;color:#000000;transform:scaleX(1.0231);">Insert Function</div>
<div class="t" style="left:1163.44px;top:302.23px;font-size:22.17px;line-height:22.17px;color:#111111;transform:scaleX(0.6675);">?</div>
<div class="t" style="left:586.91px;top:349.96px;font-size:14.93px;line-height:14.93px;color:#000000;transform:scaleX(1.0466);">Search for a function:</div>
<div class="t" style="left:606.97px;top:384.75px;font-size:15.65px;line-height:15.65px;color:#000000;transform:scaleX(0.8731);">STDEV</div>
<div class="t" style="left:601.68px;top:443.09px;font-size:15.36px;line-height:15.36px;color:#000000;transform:scaleX(0.9998);">Or select a category:</div>
<div class="t" style="left:751.99px;top:443.09px;font-size:15.36px;line-height:15.36px;color:#000000;transform:scaleX(1.0106);">Recommended</div>
<div class="t" style="left:586.92px;top:483.94px;font-size:15.07px;line-height:15.07px;color:#000000;transform:scaleX(1.0273);">Select a function:</div>
<div class="t" style="left:607.07px;top:517.92px;font-size:15.22px;line-height:15.22px;color:#ffffff;transform:scaleX(0.8940);">STDEV</div>
<div class="t" style="left:607.07px;top:539.12px;font-size:15.22px;line-height:15.22px;color:#000000;transform:scaleX(0.9137);">STDEV.P</div>
<div class="t" style="left:607.07px;top:559.92px;font-size:15.22px;line-height:15.22px;color:#000000;transform:scaleX(0.9057);">STDEV.S</div>
<div class="t" style="left:607.06px;top:580.82px;font-size:15.22px;line-height:15.22px;color:#000000;transform:scaleX(0.9266);">STDEVA</div>
<div class="t" style="left:607.07px;top:601.62px;font-size:15.22px;line-height:15.22px;color:#000000;transform:scaleX(0.9001);">STDEVP</div>
<div class="t" style="left:607.06px;top:622.42px;font-size:15.22px;line-height:15.22px;color:#000000;transform:scaleX(0.9237);">STDEVPA</div>
<div class="t" style="left:606.41px;top:643.82px;font-size:15.22px;line-height:15.22px;color:#000000;transform:scaleX(0.9206);">DSTDEV</div>
<div class="t" style="left:602.15px;top:671.46px;font-size:16.23px;line-height:16.23px;color:#000000;font-weight:bold;transform:scaleX(0.9779);">STDEV(number1,number2,...)</div>
<div class="t" style="left:602.15px;top:697.25px;font-size:15.65px;line-height:15.65px;color:#000000;transform:scaleX(1.0048);">This function is available for compatibility with Excel 2007 and earlier.</div>
<div class="t" style="left:601.19px;top:718.35px;font-size:15.65px;line-height:15.65px;color:#000000;transform:scaleX(0.9885);">Estimates standard deviation based on a sample (ignores logical values and text in the sample).</div>
<div class="t" style="left:586.15px;top:829.75px;font-size:15.65px;line-height:15.65px;color:#0066cc;transform:scaleX(1.0256);">Help on this function</div>
<div class="t" style="left:1047.70px;top:834.22px;font-size:17.10px;line-height:17.10px;color:#000000;transform:scaleX(0.8768);">OK</div>
<div class="t" style="left:1175.90px;top:834.22px;font-size:17.10px;line-height:17.10px;color:#000000;transform:scaleX(0.8791);">Cancel</div>
<div class="t" style="left:1188.67px;top:388.75px;font-size:15.65px;line-height:15.65px;color:#000000;transform:scaleX(0.9994);">Go</div>
<div class="t" style="left:734.05px;top:378.78px;font-size:26.96px;line-height:26.96px;color:#000000;font-weight:bold;transform:scaleX(1.0727);">STDEV</div>
<div class="t" style="left:1351.83px;top:381.50px;font-size:30.00px;line-height:30.00px;color:#000000;font-weight:bold;transform:scaleX(1.0393);">Go Button</div>
<div class="t" style="left:773.03px;top:821.63px;font-size:30.43px;line-height:30.43px;color:#000000;font-weight:bold;transform:scaleX(1.0200);">OK Button</div>
<div class="t" style="left:132.00px;top:956.50px;font-size:19.13px;line-height:19.13px;color:#1e6e42;font-weight:bold;transform:scaleX(1.0120);">Sheet1</div>
<div class="t" style="left:12.60px;top:994.50px;font-size:15.94px;line-height:15.94px;color:#444444;transform:scaleX(0.9665);">Edit</div>
<div class="t" style="left:157.60px;top:994.50px;font-size:15.94px;line-height:15.94px;color:#444444;transform:scaleX(0.9574);">Accessibility: Investigate</div>
<div class="t" style="left:1498.97px;top:993.85px;font-size:17.54px;line-height:17.54px;color:#a19f9d;transform:scaleX(0.8941);">220%</div>
</body></html>
